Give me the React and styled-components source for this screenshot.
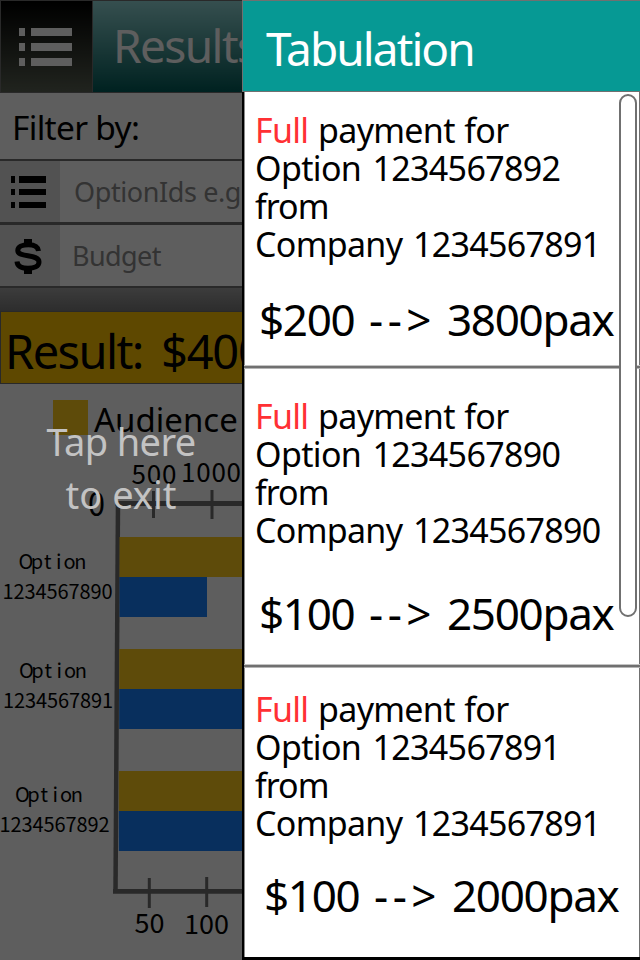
import React from 'react';
import styled, { createGlobalStyle } from 'styled-components';

const GlobalStyle = createGlobalStyle`
  * { box-sizing: border-box; }
  body { margin: 0; background: #fff; overflow: hidden; }
`;

const Screen = styled.div`
  position: relative;
  width: 640px;
  height: 960px;
  overflow: hidden;
  background: #fff;
  color: #000;
  font-family: 'Noto Sans', 'Open Sans', sans-serif;
  white-space: nowrap;
`;

const Page = styled.main`
  display: flex;
  flex-direction: column;
  width: 640px;
  height: 960px;
`;

const TopBar = styled.header`
  display: flex;
  flex: 0 0 93px;
  min-height: 0;
  border: 1px solid #707070;
`;

const MenuButton = styled.button`
  display: flex;
  align-items: center;
  width: 92px;
  padding: 0 0 0 18px;
  border: 0;
  border-right: 1px solid #707070;
  background: linear-gradient(#000, #596153);
`;

const PageTitle = styled.h1`
  flex: 1;
  margin: 0;
  padding-left: 20px;
  color: #fff;
  background: linear-gradient(#92d6d6, #005b58);
  font-size: 46px;
  font-weight: 400;
  line-height: 89px;
  letter-spacing: -1.6px;
`;

const FilterLabel = styled.div`
  flex: 0 0 66px;
  min-height: 0;
  padding-left: 12px;
  font-size: 33.5px;
  line-height: 68px;
  letter-spacing: -0.7px;
`;

const Field = styled.div`
  display: flex;
  flex: 0 0 ${(p) => p.$height}px;
  min-height: 0;
  border-top: ${(p) => p.$line}px solid #707070;
`;

const FieldIcon = styled.span`
  display: flex;
  align-items: center;
  justify-content: center;
  width: 60px;
  padding: 2px 4px 0 0;
  background: #dedede;
`;

const Placeholder = styled.span`
  padding-left: ${(p) => p.$indent}px;
  color: #8b8b8b;
  font-size: 27px;
  line-height: 62px;
  letter-spacing: ${(p) => p.$tracking}px;
`;

const Strip = styled.div`
  flex: 0 0 25px;
  border-top: 2px solid #707070;
  background: linear-gradient(#a3a3a3, #7a7a7a);
`;

const ResultBar = styled.section`
  display: flex;
  flex: 0 0 73px;
  height: 73px;
  min-height: 0;
  padding-left: 4px;
  border: 1px solid #707070;
  background: #ffc300;
  font-size: 47px;
  line-height: 79px;
  letter-spacing: -1.2px;
`;

const ResultLabel = styled.span`
  width: 156px;
  letter-spacing: -1.6px;
`;

const ChartArea = styled.section`
  flex: 1;
  svg { display: block; }
  text { font-family: 'Noto Sans CJK SC', sans-serif; }
`;

const Legend = styled.div`
  display: flex;
  height: 70px;
  padding: 16px 0 0 53px;
  gap: 6px;
  font-size: 33px;
  line-height: 39px;
`;

const Swatch = styled.span`
  width: 35px;
  height: 35px;
  background: #ffcb1b;
`;

const Scrim = styled.button`
  position: absolute;
  inset: 0 auto 0 0;
  width: 242px;
  padding: 415px 0 0;
  border: 0;
  background: rgba(0, 0, 0, 0.63);
  color: #c3c3c3;
  display: flex;
  flex-direction: column;
  align-items: center;
  font: 400 38px/52.5px 'Noto Sans', sans-serif;
`;

const ScrimLine = styled.span`
  letter-spacing: ${(p) => p.$tracking}px;
`;

const Drawer = styled.aside`
  position: absolute;
  inset: 0 0 0 242px;
  display: flex;
  flex-direction: column;
`;

const DrawerTitle = styled.h2`
  flex: 0 0 92px;
  height: 92px;
  min-height: 0;
  margin: 0;
  padding-left: 23px;
  border: 1px solid #707070;
  border-right: 0;
  background: #069994;
  color: #fff;
  font-size: 46px;
  font-weight: 400;
  line-height: 94px;
  letter-spacing: -1.9px;
`;

const PaymentList = styled.div`
  flex: 1;
  min-height: 0;
  display: flex;
  flex-direction: column;
  border-left: 2px solid #000;
  border-bottom: 3px solid #000;
`;

const Payment = styled.article`
  flex: 0 0 ${(p) => p.$height}px;
  padding: ${(p) => p.$top}px 0 0 10px;
  border-left: 1px solid #8b8b8b;
  border-right: 1px solid #707070;
  background: #fff;
`;

const Line = styled.div`
  font-size: 34px;
  line-height: 38px;
  letter-spacing: ${(p) => p.$tracking}px;
  word-spacing: ${(p) => p.$gap || 0}px;
`;

const Status = styled.span`
  color: #ff3034;
`;

const Divider = styled.div`
  flex: 0 0 4px;
  background: linear-gradient(#c4c4c4 1px, #707070 1px 3px, #b4b4b4 3px);
`;

const Price = styled.div`
  display: flex;
  margin: ${(p) => p.$gap}px 0 0 ${(p) => p.$indent}px;
  font-size: 44px;
  line-height: 60px;
  letter-spacing: -1.3px;
`;

const Amount = styled.span`
  width: 110px;
`;

const Arrow = styled.span`
  width: 78px;
  letter-spacing: 4.5px;
`;

const ScrollThumb = styled.div`
  position: absolute;
  top: 94px;
  right: 3px;
  width: 18px;
  height: 523px;
  border: 2px solid #707070;
  border-radius: 9px;
  background: #fff;
`;

const ListIcon = () => (
  <svg width="54" height="40" viewBox="0 0 54 40" fill="#fff">
    <path d="M0 1h6v8H0zM12 1h41v8H12zM0 16h6v8H0zM12 16h41v8H12zM0 31h6v8H0zM12 31h41v8H12z" />
  </svg>
);

const SmallListIcon = () => (
  <svg width="35" height="33" viewBox="0 0 35 33">
    <path d="M0 0h4v7H0zM8 0h27v7H8zM0 13h4v6H0zM8 13h27v6H8zM0 26h4v6H0zM8 26h27v6H8z" />
  </svg>
);

const DollarIcon = () => (
  <svg width="28" height="35" viewBox="0 0 28 35" fill="none" stroke="#000">
    <path d="M14 0v6M14 29v6" strokeWidth="8" />
    <path d="M24.5 12C24 7.5 20 5.7 14.5 5.7C8 5.7 3.8 7.7 3.8 11.5C3.8 19 25 14.5 25 23C25 27.3 20 29.3 14 29.3C7 29.3 3.4 27 3 22.5" strokeWidth="5" />
  </svg>
);

const groups = [
  { id: '1234567890', y: 537, x: 119.5, nameX: 20.5, idX: 2.5, nameY: 569, blue: 87.5 },
  { id: '1234567891', y: 649, x: 119.2, nameX: 21, idX: 3, nameY: 678, blue: 300 },
  { id: '1234567892', y: 771, x: 118.8, nameX: 17, idX: -0.5, nameY: 802, blue: 300 },
];

const cells = (text, x, step) =>
  [...text].map((_, i) => x + (i + 0.5) * step).join(' ');

const Chart = () => (
  <svg width="640" height="506" viewBox="0 454 640 506">
    <g stroke="#707070" fill="none">
      <path d="M118 501L115.5 893" strokeWidth="4.5" />
      <path d="M115.5 503.5H640M113 891.4H640" strokeWidth="4.8" />
      <path d="M153.5 491v27M212 490v29M149.3 878v30M206.7 877v30" strokeWidth="3" />
    </g>
    {groups.map((g) => (
      <g key={g.id}>
        <rect x={g.x} y={g.y} width="300" height="40" fill="#ffcb1b" />
        <rect x={g.x} y={g.y + 40} width={g.blue} height="40" fill="#167ffb" />
        <text x={cells('Option', g.nameX, 10.9)} y={g.nameY} fontSize="20" textAnchor="middle">Option</text>
        <text x={cells(g.id, g.idX, 11)} y={g.nameY + 30} fontSize="20" textAnchor="middle">{g.id}</text>
      </g>
    ))}
    <text x="131.5" y="483.5" fontSize="26" textLength="45">500</text>
    <text x="181" y="482" fontSize="26" textLength="60">1000</text>
    <text x="88" y="516" fontSize="33" textLength="17" lengthAdjust="spacingAndGlyphs">0</text>
    <text x="134.5" y="933" fontSize="27" textLength="30">50</text>
    <text x="184" y="934" fontSize="27" textLength="45">100</text>
  </svg>
);

const payments = [
  { option: '1234567892', company: '1234567891', cost: '$200', reach: '3800pax', height: 273, top: 19, gap: 26, indent: 4 },
  { option: '1234567890', company: '1234567890', cost: '$100', reach: '2500pax', height: 295, top: 28, gap: 34, indent: 4 },
  { option: '1234567891', company: '1234567891', cost: '$100', reach: '2000pax', height: 289, top: 22, gap: 23, indent: 9 },
];

export default function App() {
  return (
    <Screen>
      <GlobalStyle />
      <Page>
        <TopBar>
          <MenuButton aria-label="Menu"><ListIcon /></MenuButton>
          <PageTitle>Results</PageTitle>
        </TopBar>
        <FilterLabel>Filter by:</FilterLabel>
        <Field $height={63} $line={2}>
          <FieldIcon><SmallListIcon /></FieldIcon>
          <Placeholder $indent={14} $tracking={-0.4}>OptionIds e.g</Placeholder>
        </Field>
        <Field $height={64} $line={3}>
          <FieldIcon><DollarIcon /></FieldIcon>
          <Placeholder $indent={12} $tracking={-0.6}>Budget</Placeholder>
        </Field>
        <Strip />
        <ResultBar><ResultLabel>Result:</ResultLabel><span>$400</span></ResultBar>
        <ChartArea>
          <Legend><Swatch />Audience</Legend>
          <Chart />
        </ChartArea>
      </Page>
      <Scrim>
        <ScrimLine $tracking={-0.6}>Tap here</ScrimLine>
        <ScrimLine $tracking={0}>to exit</ScrimLine>
      </Scrim>
      <Drawer>
        <DrawerTitle>Tabulation</DrawerTitle>
        <PaymentList>
          {payments.map((p, i) => (
            <React.Fragment key={p.option}>
              {i > 0 && <Divider />}
              <Payment $height={p.height} $top={p.top}>
                <Line $tracking={-0.7} $gap={1.5}><Status>Full</Status> payment for</Line>
                <Line $tracking={-0.65} $gap={3}>Option {p.option}</Line>
                <Line $tracking={-1}>from</Line>
                <Line $tracking={-0.7} $gap={2.5}>Company {p.company}</Line>
                <Price $gap={p.gap} $indent={p.indent}>
                  <Amount>{p.cost}</Amount>
                  <Arrow>--&gt;</Arrow>
                  <span>{p.reach}</span>
                </Price>
              </Payment>
            </React.Fragment>
          ))}
        </PaymentList>
        <ScrollThumb />
      </Drawer>
    </Screen>
  );
}
